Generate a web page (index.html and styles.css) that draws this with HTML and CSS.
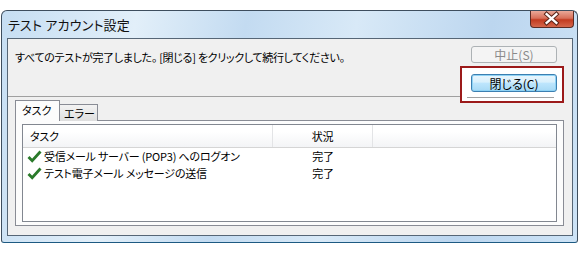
FILE: index.html
```html
<!DOCTYPE html>
<html lang="ja">
<head>
<meta charset="utf-8">
<title>テスト アカウント設定</title>
<link rel="stylesheet" href="styles.css">
</head>
<body>
<div class="window">
  <div class="titlebar">
    <span class="title">テスト アカウント設定</span>
    <div class="close-btn">
      <svg width="44" height="17" viewBox="0 0 44 17">
        <path d="M17 4 L27 13 M27 4 L17 13" stroke="#5a2418" stroke-width="4.4" stroke-linecap="square" fill="none"/>
        <path d="M17 4 L27 13 M27 4 L17 13" stroke="#ffffff" stroke-width="2.4" stroke-linecap="square" fill="none"/>
      </svg>
    </div>
  </div>
  <div class="client">
    <div class="top">
      <p class="msg">すべてのテストが完了しました。 [閉じる] をクリックして続行してください。</p>
      <div class="actions">
        <button class="btn" disabled>中止(S)</button>
        <div class="close-wrap">
          <div class="highlight"></div>
          <button class="btn default">閉じる(C)</button>
        </div>
      </div>
    </div>
    <div class="tabs">
      <div class="tab active">タスク</div>
      <div class="tab">エラー</div>
    </div>
    <div class="panel">
      <div class="list">
        <div class="head">
          <div class="c1">タスク</div>
          <div class="c2">状況</div>
          <div class="c3"></div>
        </div>
        <div class="row">
          <div class="c1"><svg class="check" width="15" height="13" viewBox="0 0 15 13"><path d="M1.5 7 L5.2 10.8 L13.5 1.5" stroke="#2a7a2a" stroke-width="2.8" fill="none"/></svg>受信メール サーバー (POP3) へのログオン</div>
          <div class="c2">完了</div>
        </div>
        <div class="row">
          <div class="c1"><svg class="check" width="15" height="13" viewBox="0 0 15 13"><path d="M1.5 7 L5.2 10.8 L13.5 1.5" stroke="#2a7a2a" stroke-width="2.8" fill="none"/></svg>テスト電子メール メッセージの送信</div>
          <div class="c2">完了</div>
        </div>
      </div>
    </div>
  </div>
</div>
</body>
</html>
```

FILE: styles.css
```css
* { box-sizing: border-box; }
html, body { margin: 0; padding: 0; background: #ffffff; }
body {
  font-family: "Noto Sans CJK JP", "Noto Sans", sans-serif;
  font-size: 11px;
  letter-spacing: -0.2px;
  font-feature-settings: "palt";
  color: #000;
}
.window {
  margin: 10px 0 0 1px;
  width: 577px;
  height: 233px;
  border: 1px solid #3e4e5e;
  border-bottom-color: #1d5a82;
  border-radius: 6px 6px 3px 3px;
  background: linear-gradient(100deg, #c6def3 0%, #e2eff9 22%, #c3dbf1 40%, #d8e9f7 58%, #bcd6ef 80%, #cde3f6 100%);
  display: flex;
  flex-direction: column;
}
.titlebar {
  height: 27px;
  display: flex;
  justify-content: space-between;
  align-items: center;
  padding-left: 6px;
}
.title {
  font-size: 13px;
  line-height: 16px;
  letter-spacing: 0.2px;
  color: #111;
}
.close-btn {
  align-self: flex-start;
  margin-right: 3px;
  width: 44px;
  height: 17px;
  border: 1px solid #5b2b24;
  border-top: none;
  border-radius: 0 0 4px 4px;
  background: linear-gradient(#e9a898 0%, #d7705a 45%, #c23b20 55%, #d5674c 100%);
  display: flex;
}
.close-btn svg { display: block; margin: -1px 0 0 -1px; }
.client {
  margin: 0 4px 5px 5px;
  height: 198px;
  border: 1px solid #566676;
  background: #f0f0f0;
  display: flex;
  flex-direction: column;
}
.top {
  display: flex;
  justify-content: space-between;
  align-items: flex-start;
  padding: 7px 7px 4px 7px;
  margin-right: 8px;
  border-bottom: 1px solid #a0a0a0;
}
.msg {
  margin: 4px 0 0 0;
  line-height: 14px;
  letter-spacing: -0.3px;
}
.actions {
  display: flex;
  flex-direction: column;
  gap: 11px;
}
.btn {
  width: 86px;
  height: 17px;
  padding: 0;
  font: inherit;
  font-size: 12px;
  line-height: 15px;
  letter-spacing: 0;
  border: 1px solid #adb2b5;
  border-radius: 3px;
  background: #f4f4f4;
  color: #8a8a8a;
}
.btn.default {
  height: 18px;
  color: #000;
  border-color: #3c7fb1;
  background: linear-gradient(#eaf6fd 0%, #d9f0fc 45%, #bee6fd 50%, #a7d9f5 100%);
  box-shadow: inset 0 0 0 1px #8fd3f5;
}
.close-wrap {
  position: relative;
  z-index: 0;
}
.close-wrap .btn { position: relative; display: block; }
.highlight {
  position: absolute;
  top: -8px;
  left: -11px;
  right: -7px;
  bottom: -11px;
  border: 2px solid #9c1a1a;
  background: #ffffff;
  z-index: -1;
}
.highlight::after {
  content: "";
  position: absolute;
  left: 5px;
  right: 8px;
  top: 29px;
  height: 1px;
  background: #a0a0a0;
}
.tabs {
  display: flex;
  align-items: flex-end;
  margin: 3px 0 -1px 7px;
  position: relative;
  z-index: 1;
}
.tab {
  height: 17px;
  width: 38px;
  white-space: nowrap;
  border: 1px solid #898c95;
  border-bottom: none;
  border-left: none;
  background: linear-gradient(#f3f3f3, #dedede);
  line-height: 16px;
  padding-left: 4px;
  font-size: 11px;
  letter-spacing: 0;
}
.tab.active {
  height: 21px;
  width: 45px;
  border-left: 1px solid #898c95;
  background: #fcfcfc;
  padding-left: 6px;
  line-height: 19px;
}
.panel {
  margin-left: 7px;
  width: 549px;
  height: 106px;
  border: 1px solid #898c95;
  background: #fcfcfc;
  padding: 3px 6px;
}
.list {
  height: 98px;
  border: 1px solid #828790;
  background: #ffffff;
}
.head {
  display: flex;
  height: 23px;
  border-bottom: 1px solid #d5d5d5;
  background: linear-gradient(#ffffff 0%, #ffffff 30%, #f3f4f6 100%);
  line-height: 22px;
}
.head .c1 { width: 250px; padding-left: 7px; border-right: 1px solid #e3e4e6; }
.head .c2 { width: 100px; text-align: center; border-right: 1px solid #e3e4e6; }
.head .c3 { flex: 1; }
.row {
  display: flex;
  height: 17px;
  line-height: 17px;
}
.row .c1 { width: 250px; padding-left: 4px; display: flex; align-items: center; white-space: nowrap; }
.row .c2 { width: 100px; text-align: center; }
.check { margin-right: 2px; flex: none; }
```
